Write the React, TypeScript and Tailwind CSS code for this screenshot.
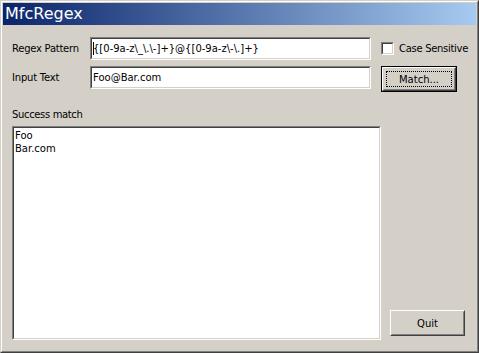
import React from "react";

function Sunken({ className = "", children }: { className?: string; children?: React.ReactNode }) {
  return (
    <div className={`border border-t-[#808080] border-l-[#808080] border-b-white border-r-white ${className}`}>
      <div className="w-full h-full border border-t-[#404040] border-l-[#404040] border-b-[#d4d0c8] border-r-[#d4d0c8] bg-white">
        {children}
      </div>
    </div>
  );
}

function Raised({ children }: { children?: React.ReactNode }) {
  return (
    <div className="w-full h-full border border-t-white border-l-white border-b-[#404040] border-r-[#404040]">
      <div className="w-full h-full border border-t-[#d4d0c8] border-l-[#d4d0c8] border-b-[#808080] border-r-[#808080] flex items-center justify-center">
        {children}
      </div>
    </div>
  );
}

export default function App() {
  return (
    <div className="w-[479px] h-[353px] border border-t-[#d4d0c8] border-l-[#d4d0c8] border-b-[#404040] border-r-[#404040] bg-[#d4d0c8] [font-family:'DejaVu_Sans',sans-serif] text-[10px] leading-[13px] text-black whitespace-nowrap">
      <div className="w-full h-full border border-t-white border-l-white border-b-[#808080] border-r-[#808080] p-px flex flex-col">
        <div className="h-[22px] shrink-0 bg-[linear-gradient(to_right,#0a246a,#a6caf0)] flex items-center pl-[2px] text-white text-[16px] leading-[20px]">
          MfcRegex
        </div>
        <div className="pl-[9px] pt-[12px] flex flex-col">
          <div className="flex items-center h-[23px]">
            <div className="w-[78px] tracking-[-0.25px]">Regex Pattern</div>
            <Sunken className="w-[281px] h-[23px]">
              <div className="h-full flex items-center pl-px whitespace-pre">
                <span className="w-px h-[13px] bg-black -mr-px" />
                {"{[0-9a-z\\_\\.\\-]+}@{[0-9a-z\\-\\.]+}"}
              </div>
            </Sunken>
            <Sunken className="ml-[10px] w-[13px] h-[13px]" />
            <div className="ml-[5px] tracking-[-0.3px]">Case Sensitive</div>
          </div>
          <div className="flex items-start h-[26px] mt-[6px]">
            <div className="w-[78px] h-[23px] flex items-center tracking-[-0.2px]">Input Text</div>
            <Sunken className="w-[281px] h-[23px]">
              <div className="h-full flex items-center pl-px">Foo@Bar.com</div>
            </Sunken>
            <div className="ml-[10px] w-[76px] h-[26px] border border-black">
              <Raised>
                <div className="w-[66px] h-[16px] border border-dotted border-black flex items-center justify-center">Match...</div>
              </Raised>
            </div>
          </div>
          <div className="flex items-end">
            <div className="flex flex-col">
              <div className="mt-[16px] h-[13px] tracking-[-0.35px]">Success match</div>
              <Sunken className="mt-[5px] w-[369px] h-[214px]">
                <div className="pl-px pt-px">
                  <div>Foo</div>
                  <div>Bar.com</div>
                </div>
              </Sunken>
            </div>
            <div className="ml-[9px] mb-[4px] w-[75px] h-[26px]">
              <Raised>Quit</Raised>
            </div>
          </div>
        </div>
      </div>
    </div>
  );
}
